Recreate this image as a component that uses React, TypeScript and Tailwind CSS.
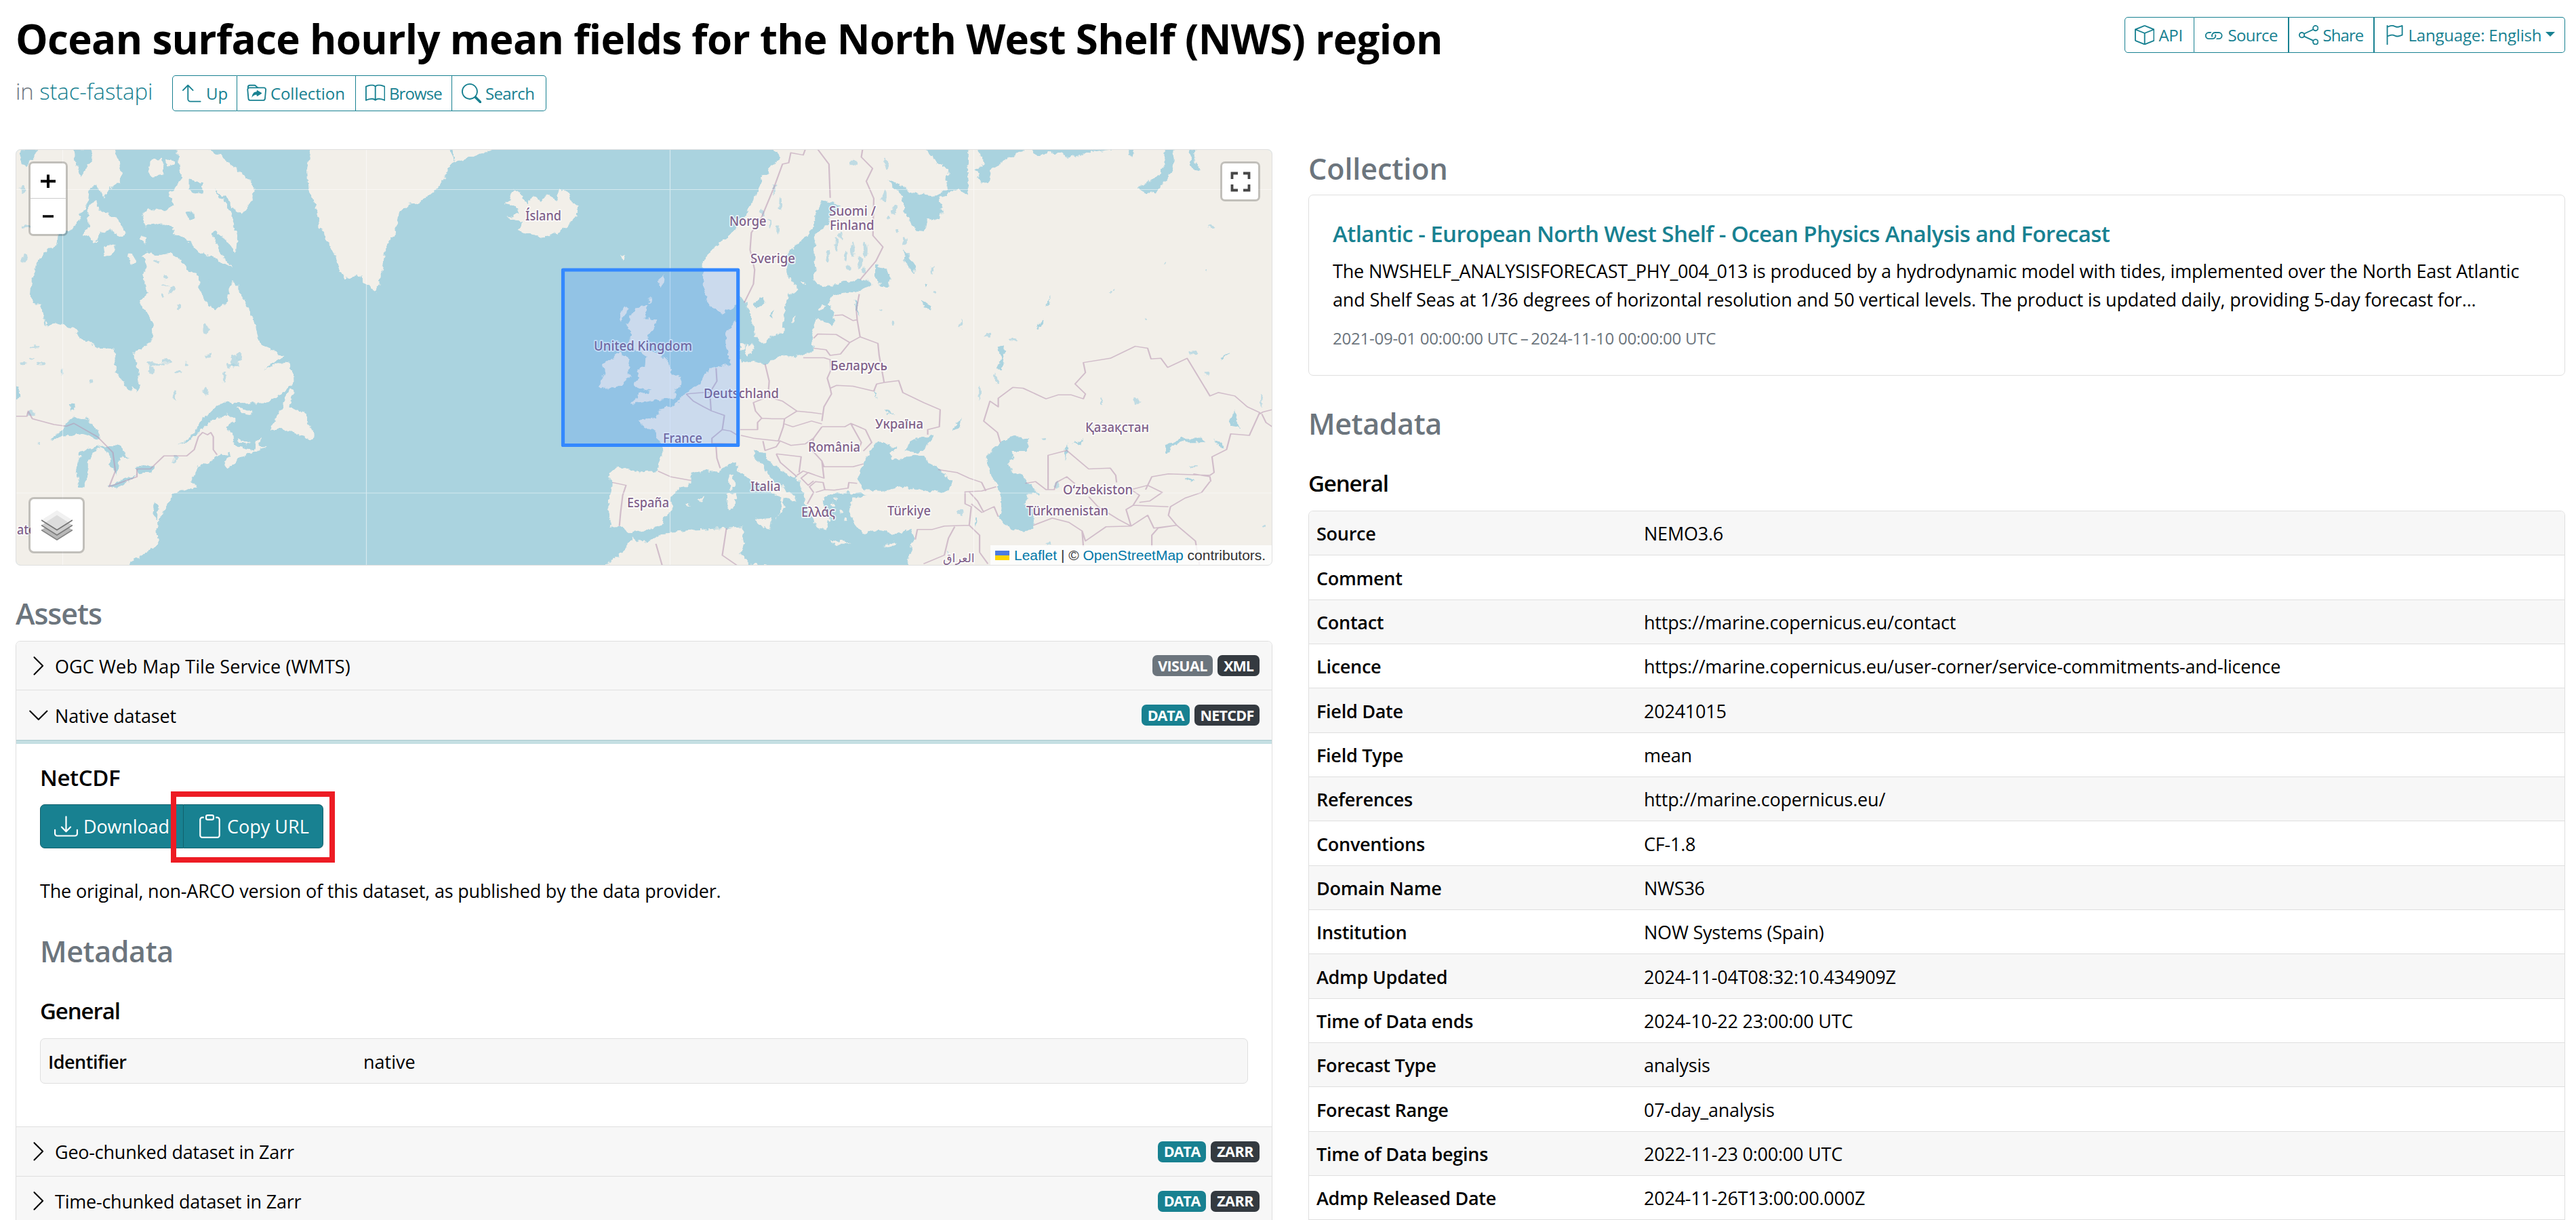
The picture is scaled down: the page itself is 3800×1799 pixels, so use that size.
import type { ReactNode } from "react";
import {
  BsArrow90DegUp,
  BsBook,
  BsBox,
  BsChevronDown,
  BsChevronRight,
  BsClipboard,
  BsDownload,
  BsFlag,
  BsFolderSymlink,
  BsLink,
  BsSearch,
  BsShare,
} from "react-icons/bs";

type Point = string;

// Outlines west of the Atlantic, in a local 1568-unit grid.
const WEST_LAND: Point[] = [
  "30,40 278,40 286,90 292,130 288,165 262,190 250,215 235,170 215,185 213,225 200,258 192,300 175,328 140,345 138,385 110,405 90,450 75,510 72,560 78,588 98,588 108,640 112,665 135,655 180,680 195,710 235,740 275,745 278,800 277,830 295,858 312,898 320,880 331,900 336,860 328,800 320,762 350,740 370,700 368,650 350,612 337,590 355,545 345,490 352,460 343,420 352,405 385,418 412,412 440,440 455,480 480,485 482,545 500,590 518,612 545,585 552,540 563,505 580,555 600,610 615,670 620,710 640,745 680,770 665,795 635,815 690,795 707,820 708,865 690,890 640,938 530,935 505,970 480,1010 465,1050 428,1085 470,1058 492,1020 520,985 550,975 568,990 565,1005 545,1015 558,1035 560,1060 575,1090 610,1100 618,1070 632,1055 628,1085 640,1092 610,1108 578,1125 560,1155 545,1168 540,1145 556,1112 523,1125 510,1140 475,1165 462,1210 475,1230 415,1255 410,1280 385,1340 378,1380 380,1420 360,1455 330,1480 305,1515 30,1515",
  "700,888 710,895 695,950 735,970 745,1010 757,1040 750,1065 735,1050 715,1045 700,1030 650,1028 665,990 680,950",
  "568,950 600,960 608,978 580,970",
  "572,1060 590,1075 605,1072 595,1082 575,1075",
  "425,40 490,40 530,70 560,105 590,140 617,180 608,215 600,245 582,275 565,260 550,225 515,185 545,240 560,290 572,350 568,415 545,365 520,335 510,345 540,430 560,465 520,430 480,410 455,370 420,335 400,310 375,310 352,315 343,285 355,255 395,262 420,240 405,210 438,150 430,90",
  "372,80 390,78 396,110 390,140 370,146 358,125 362,95",
  "228,225 240,260 275,285 305,340 290,355 265,330 240,340 228,375 215,350 197,345 215,310 210,260",
  "248,420 255,390 282,385 275,405 258,422",
  "312,415 322,415 325,440 316,452 309,435",
  "340,350 352,360 350,375 340,368",
  "400,80 420,90 418,110 402,102",
  "750,40 740,110 742,180 765,270 770,320 795,380 810,440 830,500 870,490 885,525 903,543 915,520 922,460 930,400 952,340 960,270 985,240 1010,235 1050,190 1070,150 1080,115 1093,92 1140,75 1190,40",
  "1240,190 1262,215 1270,240 1285,210 1300,230 1320,208 1340,225 1350,188 1370,205 1390,250 1390,280 1365,320 1330,345 1310,360 1275,345 1245,335 1258,305 1222,285 1250,275 1245,250 1218,240 1230,215",
  "1494,424 1508,418 1506,430 1502,440",
];

const WEST_WATER: Point[] = [
  "178,48 220,48 215,100 195,145 185,110",
  "50,48 90,48 80,85 60,110 48,80",
  "1080,48 1090,48 1094,90",
  "455,155 490,165 486,200 470,205 455,190",
  "445,265 465,262 468,290 455,295",
  "118,1062 150,1030 172,985 210,993 235,1035 238,1062 200,1046 150,1052 130,1065",
  "190,1230 185,1170 193,1112 215,1092 242,1090 225,1110 212,1140 212,1190 200,1232",
  "238,1086 290,1090 315,1134 288,1122 282,1190 268,1160 262,1110",
  "262,1228 300,1202 332,1188 300,1220 272,1236",
  "325,1165 375,1150 365,1175 330,1185",
  "30,870 45,880 46,915 36,925 30,925",
  "168,940 180,935 182,965 170,968",
  "372,1285 382,1300 380,1350 370,1330",
];

// Outlines of Europe, Asia and Africa, in the eastern local grid.
const EAST_LAND: Point[] = [
  "325,40 345,75 330,100 305,140 295,180 275,240 250,310 215,360 180,400 160,440 158,520 170,590 205,622 240,590 248,560 262,590 275,640 285,700 305,735 320,705 350,690 355,600 365,560 388,540 375,510 360,480 358,420 395,370 415,340 430,300 430,260 445,230 480,235 490,250 468,275 460,310 430,350 425,400 430,460 425,510 450,530 500,515 550,502 568,525 530,545 470,560 460,590 475,620 470,665 455,650 430,640 420,700 425,750 400,770 340,775 310,800 275,790 250,795 246,760 240,700 240,650 214,690 215,750 225,800 180,815 160,840 150,870 120,900 105,920 85,950 50,960 50,985 5,995 10,1015 40,1035 55,1075 60,1110 50,1172 0,1175 -50,1163 -70,1190 -60,1215 -70,1300 -63,1370 -35,1368 -20,1395 0,1385 30,1380 60,1360 70,1330 85,1310 80,1280 95,1245 130,1215 130,1180 160,1172 195,1180 215,1150 235,1145 250,1180 280,1215 310,1240 345,1265 350,1300 335,1345 330,1350 358,1300 352,1268 385,1285 375,1258 345,1225 315,1190 300,1150 280,1125 285,1100 310,1110 315,1135 350,1175 390,1205 400,1250 405,1290 420,1330 430,1370 455,1385 460,1350 480,1350 455,1310 445,1280 470,1255 505,1250 520,1270 505,1300 520,1350 545,1395 580,1380 620,1395 662,1380 665,1420 655,1470 650,1515 1540,1515 1540,40",
  "-80,1515 -55,1480 -30,1455 -15,1405 0,1425 30,1420 60,1395 130,1382 215,1375 255,1372 250,1400 260,1430 245,1460 270,1500 360,1515",
  "-5,600 30,595 15,640 48,642 40,680 25,700 28,755 60,770 75,800 80,832 105,840 105,870 90,900 92,918 50,925 10,935 -12,942 5,905 35,895 -5,880 5,850 0,820 20,810 22,775 5,755 -20,740 -15,690 -25,660 -10,620",
  "-45,755 -20,790 -20,850 -40,875 -73,890 -90,875 -80,840 -85,800 -60,785",
  "-32,602 -25,605 -35,640 -42,650 -40,625",
  "55,495 65,490 58,535 53,520",
  "27,570 34,568 30,585",
  "222,1190 232,1188 234,1225 228,1240 221,1220",
  "218,1255 236,1252 235,1300 222,1312 216,1290",
  "282,1345 325,1340 322,1380 305,1372 285,1355",
  "462,1418 500,1422 512,1432 480,1432",
  "592,1435 625,1424 612,1440 600,1442",
  "146,1272 160,1265 158,1280",
  "118,1292 128,1288 126,1300",
  "375,635 383,630 380,655 374,658",
  "260,735 278,728 282,750 268,770 258,755",
  "248,728 258,735 256,752 248,748",
  "440,600 455,598 450,615 438,612",
  "395,515 408,512 406,524",
];

const EAST_WATER: Point[] = [
  "690,40 720,90 750,120 745,190 720,210 680,205 650,190 605,150 615,180 640,210 645,270 670,330 690,335 700,290 730,295 735,250 725,220 770,190 800,210 795,130 800,40",
  "812,120 830,165 850,160 855,110 900,75 945,40 820,40 838,100",
  "945,40 960,70 1000,58 1050,75 1100,56 1200,40",
  "1180,40 1200,40 1192,82",
  "1270,40 1270,110 1250,150 1205,180 1225,197 1250,200 1265,165 1290,130 1295,90 1290,40",
  "1332,40 1345,48 1340,90 1358,122 1340,118 1333,90",
  "595,1068 575,1080 560,1110 545,1150 530,1200 545,1240 590,1245 640,1230 700,1248 750,1245 757,1210 725,1165 690,1130 672,1120 650,1125 625,1140 610,1115 625,1095 600,1080",
  "645,1100 665,1065 715,1048 705,1075 690,1100 675,1110",
  "498,1258 535,1252 555,1260 525,1268",
  "880,1070 910,1055 940,1060 940,1105 905,1105 912,1135 895,1140 900,1170 935,1200 942,1215 965,1245 968,1256 940,1255 935,1290 955,1320 955,1380 925,1385 890,1370 872,1340 880,1270 865,1220 850,1180 842,1130 855,1100",
  "575,450 600,470 612,500 605,530 590,530 575,500",
  "640,400 670,455 668,485 645,440",
  "280,590 300,562 308,585 292,605",
  "318,630 330,605 326,640",
  "522,575 532,585 532,625 525,615",
  "1275,1115 1272,1085 1310,1062 1365,1064 1365,1072 1310,1072 1285,1090 1285,1112",
  "1390,1065 1408,1075 1412,1095 1400,1085",
  "1430,985 1445,960 1440,1005 1455,1028 1432,1015",
  "1318,1205 1350,1200 1335,1213",
  "1030,1100 1040,1075 1032,1140",
  "1050,1080 1075,1065 1070,1082",
  "870,740 885,735 880,820 865,818 878,780",
  "760,1032 782,990 776,1025",
  "960,670 980,640 978,655 965,675",
  "985,598 995,560 996,590",
  "685,575 710,600 705,615 690,600",
  "690,515 698,520 692,530",
  "592,960 610,970 622,982 600,972",
  "572,895 577,900 577,925",
  "815,1340 822,1345 818,1368",
  "1405,780 1430,760 1415,780",
  "450,1262 500,1258 515,1290 500,1345 520,1375 480,1370 455,1320",
];

const WEST_LAKES: [number, number, number, number][] = [
  [400, 500, 5, 9], [412, 540, 6, 12], [392, 560, 5, 7], [430, 600, 3, 8], [375, 800, 22, 6], [365, 820, 8, 14], [400, 790, 14, 5], [495, 680, 6, 20], [500, 770, 10, 6], [565, 790, 8, 22], [575, 775, 5, 14], [560, 805, 14, 5], [420, 910, 5, 20], [495, 893, 6, 14], [430, 830, 8, 4], [450, 800, 6, 5], [100, 800, 12, 4], [75, 780, 6, 5], [150, 828, 4, 5], [220, 858, 5, 5], [55, 800, 8, 6], [65, 320, 14, 5], [60, 430, 8, 12], [55, 190, 6, 12], [75, 975, 8, 12], [90, 1078, 3, 5], [422, 1135, 3, 14], [540, 845, 3, 18], [85, 740, 12, 3], [505, 510, 3, 8], [380, 440, 6, 4], [395, 525, 10, 3],
];

const EAST_LAKES: [number, number, number, number][] = [
  [460, 420, 5, 20], [480, 380, 4, 26], [500, 420, 5, 18], [520, 400, 4, 24], [535, 440, 6, 22], [550, 400, 5, 26], [510, 460, 7, 10], [490, 350, 3, 14], [520, 95, 8, 10], [600, 100, 6, 20], [595, 210, 6, 22], [620, 260, 4, 16], [645, 370, 5, 20], [650, 430, 6, 22], [605, 290, 6, 8], [625, 330, 4, 8], [330, 190, 3, 22], [345, 240, 3, 24], [320, 310, 3, 20], [300, 270, 3, 14], [340, 330, 3, 16], [545, 470, 4, 10], [588, 608, 6, 4], [712, 470, 2, 14], [718, 550, 6, 6], [780, 660, 3, 18], [845, 700, 8, 5], [905, 715, 12, 4], [865, 850, 3, 18], [1120, 930, 3, 12], [1203, 930, 6, 8], [1340, 760, 8, 6], [1372, 835, 4, 10], [1225, 643, 3, 3], [1145, 545, 3, 3], [1370, 470, 3, 4], [1270, 448, 3, 3], [1385, 322, 8, 4], [1340, 1160, 9, 4], [980, 1062, 5, 5], [990, 1425, 8, 4], [1012, 1222, 5, 14], [780, 1320, 8, 10], [745, 1462, 2, 8], [1512, 1370, 4, 5], [1505, 930, 2, 22], [825, 900, 3, 24], [615, 655, 3, 10],
];

const WEST_BORDERS: Point[] = [
  "38,983 65,983 68,965 78,992 130,1012 160,1018 178,1008 235,1055 272,1110 278,1175 263,1230 330,1195 330,1168 362,1168 395,1122 450,1122 468,1100 478,1055 488,1040 500,1048 508,1040 514,1055 514,1100 523,1118",
];

const EAST_BORDERS: Point[] = [
  "405,48 400,68 370,60 365,95 350,100 330,180 300,285 275,340 272,400 283,470 280,520 258,585",
  "435,48 462,100 465,218",
  "543,48 540,75 567,115 552,160 570,220 568,350 592,390 575,440 537,505",
  "535,555 528,610 530,645 537,705",
  "475,630 495,628 520,648 530,645",
  "425,710 435,695 480,697 512,725 537,705 580,728 583,770 595,865",
  "425,745 455,750 465,770 490,765 512,725",
  "400,778 450,778 465,785 467,820 458,850 465,885 468,905 450,950 445,1000",
  "465,885 480,875 520,878 570,895 577,870 595,865 630,858 640,900 690,935 730,960 728,1020 700,1030 700,1048",
  "308,800 318,860 315,915 280,935 285,965 300,990 325,992 355,992 385,965",
  "315,915 350,930 385,965 420,970 445,975",
  "248,1030 290,1030 290,1005 300,990",
  "355,992 352,1020 340,1070 280,1060 250,1050",
  "355,1010 375,1020 420,1000 445,1010",
  "445,1020 500,1020 515,1008 550,1030 565,1075 545,1105",
  "425,1060 445,1020",
  "515,1010 540,1075 535,1095",
  "345,1070 370,1085 405,1080 425,1060",
  "425,1060 420,1100 445,1140 450,1160 520,1160 545,1150",
  "445,1140 450,1200 430,1190 412,1180 395,1200 412,1225 425,1210",
  "450,1240 475,1242 508,1235 510,1215 530,1218",
  "335,1115 395,1125 390,1180",
  "335,1115 345,1145 385,1195",
  "303,1070 308,1103 335,1090 345,1068",
  "410,1290 425,1250 415,1230 430,1212 448,1215 452,1240 430,1250",
  "385,1190 400,1175 430,1190",
  "118,905 135,930 160,950 180,965 210,980 205,1030 180,1060 180,1078 240,1080",
  "118,905 160,900 175,900",
  "190,815 192,860 175,900 178,965",
  "205,1030 225,1035 242,1050",
  "190,1090 192,1130 200,1165",
  "50,1175 80,1195 130,1208",
  "-60,1215 -27,1225 -35,1260 -40,1320 -43,1368",
  "670,1415 675,1380 710,1380 740,1368 800,1365 805,1300 790,1290 790,1248 830,1245 865,1230",
  "690,1500 740,1470 750,1410 765,1370",
  "725,1170 770,1180 800,1200 830,1215 840,1245",
  "805,1290 830,1320 860,1300 870,1335",
  "800,1248 820,1280 835,1320",
  "800,1365 825,1400 825,1460 845,1500",
  "875,1075 868,1040 835,1000 850,930 870,950 870,920 905,882 930,885 985,922 1015,908 1045,908 1075,922 1080,905 1055,870 1080,830 1075,795 1140,780 1200,738 1230,745 1238,782 1262,780 1278,812 1325,780 1380,912 1400,900 1440,912 1470,950 1500,970 1475,1050 1430,1045 1420,1100 1385,1125 1390,1180 1380,1190 1280,1185 1240,1195 1225,1240",
  "1500,975 1508,968 1530,960",
  "1505,975 1515,1005 1530,1020",
  "990,1240 990,1120 1035,1103 1088,1168 1140,1165 1153,1190 1155,1215",
  "935,1218 960,1212 985,1240 1005,1240 1010,1215 1035,1195 1055,1220",
  "955,1365 1000,1340 1040,1355 1072,1385 1080,1420 1130,1370 1190,1368 1230,1330 1245,1375 1300,1365 1345,1420 1355,1505",
  "1088,1265 1110,1300 1160,1345 1190,1368 1178,1310 1195,1295 1280,1300",
  "1195,1295 1210,1260 1190,1240 1230,1225 1265,1250 1235,1280 1210,1285",
  "1380,1212 1360,1250 1320,1270 1285,1300 1280,1330 1300,1365 1255,1375 1240,1400 1240,1440",
  "1340,1185 1380,1195 1382,1212",
  "1072,1385 1075,1440",
  "45,1430 60,1505",
  "215,1375 205,1470 240,1505",
];

const toPath = (list: Point[], close: boolean) =>
  list.map((p) => `M${p.split(" ").join("L")}${close ? "Z" : ""}`).join("");

// text, x, baseline, drawn width
const LABELS: [string, number, number, number][] = [
  ["Ísland", 775, 325, 53],
  ["Norge", 1076, 332.6, 54.5],
  ["Suomi /", 1223, 318, 69],
  ["Finland", 1224, 339, 65.5],
  ["Sverige", 1107, 388, 66],
  ["Беларусь", 1225, 545.6, 84],
  ["United Kingdom", 876, 517.4, 145],
  ["Deutschland", 1038, 587, 111],
  ["France", 978, 652.5, 58],
  ["Україна", 1291, 632, 71],
  ["România", 1192, 666, 77],
  ["Italia", 1107, 723.6, 44.5],
  ["España", 925, 748, 62],
  ["Ελλάς", 1182, 762, 50],
  ["Türkiye", 1309, 760, 64],
  ["Қазақстан", 1601, 637, 94],
  ["O‘zbekiston", 1568, 728.6, 103],
  ["Türkmenistan", 1514, 760, 121],
  ["ates", 25, 787.5, 36],
];

function Lakes({ items }: { items: [number, number, number, number][] }) {
  return (
    <>
      {items.map(([x, y, rx, ry]) => (
        <ellipse key={`${x}-${y}`} cx={x} cy={y} rx={rx} ry={ry} fill="#aad3df" opacity={0.7} />
      ))}
    </>
  );
}

const WEST = "translate(0 200) scale(.6122 .4209)";
const EAST = "translate(940 200) scale(.6122 .4209)";

function MapCanvas() {
  return (
    <svg viewBox="24 221 1852 612" width="1852" height="612" className="block">
      <defs>
        <filter id="coast" x="-5%" y="-5%" width="110%" height="110%" colorInterpolationFilters="sRGB">
          <feTurbulence type="fractalNoise" baseFrequency="0.1" numOctaves="3" seed="4" />
          <feDisplacementMap in="SourceGraphic" scale="10" xChannelSelector="R" yChannelSelector="G" />
        </filter>
      </defs>
      <rect x="0" y="200" width="1900" height="660" fill="#aad3df" />
      <g filter="url(#coast)">
        <g transform={WEST}>
          <path d={toPath(WEST_LAND, true)} fill="#f2efe9" />
          <path d={toPath(WEST_WATER, true)} fill="#aad3df" />
          <Lakes items={WEST_LAKES} />
        </g>
        <g transform={EAST}>
          <path d={toPath(EAST_LAND, true)} fill="#f2efe9" />
          <path d={toPath(EAST_WATER, true)} fill="#aad3df" />
          <Lakes items={EAST_LAKES} />
        </g>
        <g transform={EAST} fill="#f2efe9">
          <ellipse cx="470" cy="1290" rx="4" ry="6" />
          <ellipse cx="490" cy="1320" rx="4" ry="5" />
          <ellipse cx="505" cy="1345" rx="3" ry="5" />
          <ellipse cx="478" cy="1275" rx="6" ry="3" />
        </g>
      </g>
      <g fill="none" stroke="#b794b0" strokeOpacity={0.55} strokeLinejoin="round">
        <g transform={WEST}>
          <path d={toPath(WEST_BORDERS, false)} strokeWidth="3.6" />
        </g>
        <g transform={EAST}>
          <path d={toPath(EAST_BORDERS, false)} strokeWidth="3.6" />
        </g>
      </g>
      <path
        d="M92.5 220V834M540.5 220V834M988.5 220V834M1436.5 220V834M24 279.5H1877M24 727H1877"
        stroke="#fff"
        strokeOpacity={0.5}
        strokeWidth="1.2"
      />
      <g
        fill="#80608a"
        stroke="#fff"
        strokeOpacity={0.75}
        strokeWidth="3.5"
        strokeLinejoin="round"
        paintOrder="stroke"
        fontSize="19.5"
        className="font-['Noto_Sans',sans-serif] font-medium"
      >
        {LABELS.map(([t, x, y, w]) => (
          <text key={t} x={x} y={y} textLength={w} lengthAdjust="spacingAndGlyphs">
            {t}
          </text>
        ))}
        <text x="1391" y="829" fontSize="17.5" className="font-['DejaVu_Sans',sans-serif] font-normal">
          العراق
        </text>
      </g>
      <rect x="830.5" y="398" width="258.2" height="258.5" fill="#3388ff" fillOpacity={0.2} stroke="#3388ff" strokeWidth="5.2" strokeLinejoin="round" />
    </svg>
  );
}

function LayersIcon() {
  return (
    <svg width="46" height="46" viewBox="0 0 46 46">
      <path d="M0 29.500 23 15 46 29.500 23 44z" fill="#b8b8b8" />
      <path d="M0 29.500 23 44 46 29.500" fill="none" stroke="#858585" strokeWidth="1.6" />
      <path d="M0 22.500 23 8 46 22.500 23 37z" fill="#cdcdcd" />
      <path d="M0 22.500 23 37 46 22.500" fill="none" stroke="#7b7b7b" strokeWidth="1.6" />
      <path d="M0 15 23 .5 46 15 23 29.500z" fill="#f1f1f1" />
      <path d="M6 18.500 23 7.500 40 18.500 23 29z" fill="#dddddd" />
      <path d="M0 15 23 29.500 46 15" fill="none" stroke="#757575" strokeWidth="1.800" />
    </svg>
  );
}

function MapPanel() {
  return (
    <div className="relative h-[614px] overflow-hidden rounded-[7px] border border-[#dfdfdf]">
      <MapCanvas />
      <div className="absolute left-[18px] top-[17px] flex w-[58px] flex-col overflow-hidden rounded-[7px] border-[3.5px] border-black/20 bg-white bg-clip-padding">
        <span className="flex h-[52px] items-center justify-center border-b border-[#ccc]">
          <svg width="22" height="22" viewBox="0 0 22 22"><path d="M11 1.500V21M0 11.200H22" stroke="#000" strokeWidth="4" /></svg>
        </span>
        <span className="flex h-[52px] items-center justify-center">
          <svg width="18" height="6" viewBox="0 0 18 6"><path d="M1 3H17" stroke="#000" strokeWidth="3.600" /></svg>
        </span>
      </div>
      <div className="absolute right-[17px] top-[17px] flex h-[59px] w-[59px] items-center justify-center rounded-[7px] border-[3.5px] border-black/20 bg-white bg-clip-padding">
        <svg width="30" height="30" viewBox="0 0 30 30" fill="none" stroke="#464646" strokeWidth="3.800">
          <path d="M2.500 11V2.500H11M19 2.500H27.500V11M27.500 19V27.500H19M11 27.500H2.500V19" />
        </svg>
      </div>
      <div className="absolute bottom-[17px] left-[18px] flex h-[83px] w-[83px] items-center justify-center rounded-[8px] border-[3.5px] border-black/20 bg-white bg-clip-padding">
        <LayersIcon />
      </div>
      <div className="absolute bottom-0 right-0 flex h-[29px] w-[415px] items-center bg-white/80 pl-[7px] font-['Liberation_Sans',sans-serif] text-[21px] leading-[29px] text-[#333]">
        <span className="mr-[7px] flex h-[14px] w-[21px] flex-col">
          <span className="h-1/2 bg-[#4c7be1]" />
          <span className="h-1/2 bg-[#ffd500]" />
        </span>
        <span className="whitespace-pre">
          <span className="text-[#0078a8]">Leaflet</span> | © <span className="text-[#0078a8]">OpenStreetMap</span> contributors.
        </span>
      </div>
    </div>
  );
}

function GroupButton({ icon, children, className }: { icon: ReactNode; children: ReactNode; className: string }) {
  return (
    <button className={`flex h-[53px] items-center gap-[6px] border-[#188191] pl-[14px] text-[24px] leading-none whitespace-nowrap ${className}`}>
      <span className="text-[29.4px]">{icon}</span>
      {children}
    </button>
  );
}

function Heading({ children, className = "" }: { children: ReactNode; className?: string }) {
  return <h2 className={`text-[43px] leading-[52px] font-semibold text-[#6c757d] ${className}`}>{children}</h2>;
}

function Badge({ children, className }: { children: ReactNode; className: string }) {
  return (
    <span className={`flex h-[31px] items-center justify-center rounded-[7px] text-[21.5px] leading-none font-bold text-white ${className}`}>
      {children}
    </span>
  );
}

function AssetHeader({ open, title, badges, className }: { open?: boolean; title: string; badges: ReactNode; className: string }) {
  return (
    <div className={`flex items-center bg-[#f7f7f7] pr-[18px] pl-[16px] text-[27px] ${className}`}>
      <span className="mr-[7px] w-[34px] text-[33.6px]">{open ? <BsChevronDown /> : <BsChevronRight />}</span>
      <span className="pt-[3px]">{title}</span>
      <span className="ml-auto flex gap-[7px]">{badges}</span>
    </div>
  );
}

const METADATA: [string, string][] = [
  ["Source", "NEMO3.6"],
  ["Comment", ""],
  ["Contact", "https://marine.copernicus.eu/contact"],
  ["Licence", "https://marine.copernicus.eu/user-corner/service-commitments-and-licence"],
  ["Field Date", "20241015"],
  ["Field Type", "mean"],
  ["References", "http://marine.copernicus.eu/"],
  ["Conventions", "CF-1.8"],
  ["Domain Name", "NWS36"],
  ["Institution", "NOW Systems (Spain)"],
  ["Admp Updated", "2024-11-04T08:32:10.434909Z"],
  ["Time of Data ends", "2024-10-22 23:00:00 UTC"],
  ["Forecast Type", "analysis"],
  ["Forecast Range", "07-day_analysis"],
  ["Time of Data begins", "2022-11-23 0:00:00 UTC"],
  ["Admp Released Date", "2024-11-26T13:00:00.000Z"],
];

function DataBadge() {
  return <Badge className="w-[71px] bg-[#188191] tracking-[-1.1px]">DATA</Badge>;
}

export default function App() {
  return (
    <div className="h-[1799px] w-[3800px] overflow-hidden bg-white pr-[16px] pl-[23px] font-['Open_Sans',sans-serif] text-black">
      <header className="flex justify-between">
        <div>
          <h1 className="mt-[21px] text-[60px] leading-[72px] font-bold tracking-[-0.65px] whitespace-nowrap">
            Ocean surface hourly mean fields for the North West Shelf (NWS) region
          </h1>
          <div className="mt-[18px] flex text-[#188191]">
            <span className="w-[230.5px] pt-[2px] text-[33px] leading-[44px] font-light tracking-[-0.12px]">
              <span className="text-[#6c757d]">in</span> stac-fastapi
            </span>
            <div className="flex">
              <GroupButton icon={<BsArrow90DegUp />} className="w-[96px] rounded-l-[5px] border">Up</GroupButton>
              <GroupButton icon={<BsFolderSymlink />} className="w-[174px] border-y tracking-[-0.04px]">Collection</GroupButton>
              <GroupButton icon={<BsBook />} className="w-[143px] border tracking-[-0.9px]">Browse</GroupButton>
              <GroupButton icon={<BsSearch />} className="w-[139px] rounded-r-[5px] border border-l-0 tracking-[-0.6px]">Search</GroupButton>
            </div>
          </div>
        </div>
        <div className="mt-[25px] flex text-[#188191]">
          <GroupButton icon={<BsBox />} className="w-[103px] rounded-l-[5px] border tracking-[-0.3px]">API</GroupButton>
          <GroupButton icon={<BsLink />} className="w-[140px] border-y border-r-2 tracking-[-0.6px]">Source</GroupButton>
          <GroupButton icon={<BsShare />} className="w-[126px] border-y border-r-2 tracking-[-0.9px]">Share</GroupButton>
          <GroupButton icon={<BsFlag />} className="w-[281px] rounded-r-[5px] border border-l-0 tracking-[-0.18px]">
            Language: English
            <span className="mb-[2px] h-0 w-0 border-x-[7px] border-t-[7.5px] border-x-transparent border-t-[#188191]" />
          </GroupButton>
        </div>
      </header>

      <main className="mt-[56px] flex gap-[53px]">
        <section className="w-[1854px]">
          <MapPanel />
          <Heading className="mt-[45px] tracking-[-1px]">Assets</Heading>
          <div className="mt-[14px] h-[900px] rounded-t-[7px] border border-[#dfdfdf]">
            <AssetHeader
              title="OGC Web Map Tile Service (WMTS)"
              className="h-[72px] rounded-t-[6px] border-b border-[#dfdfdf] tracking-[0.09px]"
              badges={
                <>
                  <Badge className="w-[89px] bg-[#6c757d] tracking-[-0.6px]">VISUAL</Badge>
                  <Badge className="w-[62px] bg-[#343a40] tracking-[-1.1px]">XML</Badge>
                </>
              }
            />
            <AssetHeader
              open
              title="Native dataset"
              className="h-[73px] tracking-[-0.17px]"
              badges={
                <>
                  <DataBadge />
                  <Badge className="w-[96px] bg-[#343a40] tracking-[-0.7px]">NETCDF</Badge>
                </>
              }
            />
            <div className="h-[6px] border-t border-[#a9c9ce] bg-[#c5dfe3]" />
            <div className="px-[35px] pt-[30px]">
              <h3 className="text-[33px] leading-[40px] font-semibold tracking-[-0.4px]">NetCDF</h3>
              <div className="relative mt-[19px] flex w-fit text-[27px] text-white">
                <button className="flex h-[65px] w-[212px] items-center gap-[8px] rounded-l-[7px] border border-[#12616d] bg-[#188191] pl-[20px] tracking-[-0.13px]">
                  <span className="text-[35px]"><BsDownload /></span>
                  <span className="pt-[2px]">Download</span>
                </button>
                <button className="flex h-[65px] w-[206px] items-center gap-[8px] rounded-r-[7px] border border-l-0 border-[#12616d] bg-[#188191] pl-[21px]">
                  <span className="text-[35px]"><BsClipboard /></span>
                  <span className="pt-[2px]">Copy URL</span>
                </button>
                <div className="absolute top-[-19px] left-[193px] h-[105px] w-[242px] border-8 border-[#ed1c24]" />
              </div>
              <p className="mt-[42px] text-[27px] leading-[42px] tracking-[-0.18px]">
                The original, non-ARCO version of this dataset, as published by the data provider.
              </p>
              <Heading className="mt-[42px] tracking-[-0.4px]">Metadata</Heading>
              <h3 className="mt-[42px] text-[33px] leading-[40px] font-semibold tracking-[-1.1px]">General</h3>
              <dl className="mt-[20px] flex h-[67px] w-[1782px] items-center rounded-[7px] border border-[#dfdfdf] bg-[#f7f7f7] pt-[3px] text-[27px]">
                <dt className="w-[476px] pl-[11px] font-semibold tracking-[-0.5px]">Identifier</dt>
                <dd>native</dd>
              </dl>
            </div>
            <AssetHeader
              title="Geo-chunked dataset in Zarr"
              className="mt-[63px] h-[73px] border-t border-[#dfdfdf] tracking-[-0.23px]"
              badges={
                <>
                  <DataBadge />
                  <Badge className="w-[72px] bg-[#343a40] tracking-[-0.5px]">ZARR</Badge>
                </>
              }
            />
            <AssetHeader
              title="Time-chunked dataset in Zarr"
              className="h-[73px] border-t border-[#dfdfdf] tracking-[-0.23px]"
              badges={
                <>
                  <DataBadge />
                  <Badge className="w-[72px] bg-[#343a40] tracking-[-0.5px]">ZARR</Badge>
                </>
              }
            />
          </div>
        </section>

        <section className="w-[1854px]">
          <Heading className="mt-[3px] tracking-[-0.05px]">Collection</Heading>
          <article className="mt-[12px] h-[267px] rounded-[7px] border border-[#dfdfdf] px-[35px] pt-[36px] whitespace-nowrap">
            <h3 className="text-[33px] leading-[42px] font-semibold tracking-[-0.58px] text-[#188191]">
              Atlantic - European North West Shelf - Ocean Physics Analysis and Forecast
            </h3>
            <p className="mt-[13px] text-[27px] leading-[42px] tracking-[-0.165px]">
              The NWSHELF_ANALYSISFORECAST_PHY_004_013 is produced by a hydrodynamic model with tides, implemented over the North East Atlantic
              <br />
              and Shelf Seas at 1/36 degrees of horizontal resolution and 50 vertical levels. The product is updated daily, providing 5-day forecast for...
            </p>
            <p className="mt-[18px] text-[24px] leading-[36px] tracking-[-0.24px] text-[#6c757d]">
              2021-09-01 00:00:00 UTC{"\u2009–\u2009"}2024-11-10 00:00:00 UTC
            </p>
          </article>
          <Heading className="mt-[45px] tracking-[-0.4px]">Metadata</Heading>
          <h3 className="mt-[42px] text-[33px] leading-[40px] font-semibold tracking-[-1.1px]">General</h3>
          <dl className="mt-[20px] rounded-t-[7px] border border-[#dfdfdf] text-[27px]">
            {METADATA.map(([name, value]) => (
              <div key={name} className="flex h-[65.33px] items-center border-b border-[#dfdfdf] pt-[3px] odd:bg-[#f7f7f7] first:rounded-t-[6px]">
                <dt className="w-[494px] pl-[11px] font-semibold tracking-[-0.28px]">{name}</dt>
                <dd className="tracking-[-0.22px]">{value}</dd>
              </div>
            ))}
          </dl>
        </section>
      </main>
    </div>
  );
}
